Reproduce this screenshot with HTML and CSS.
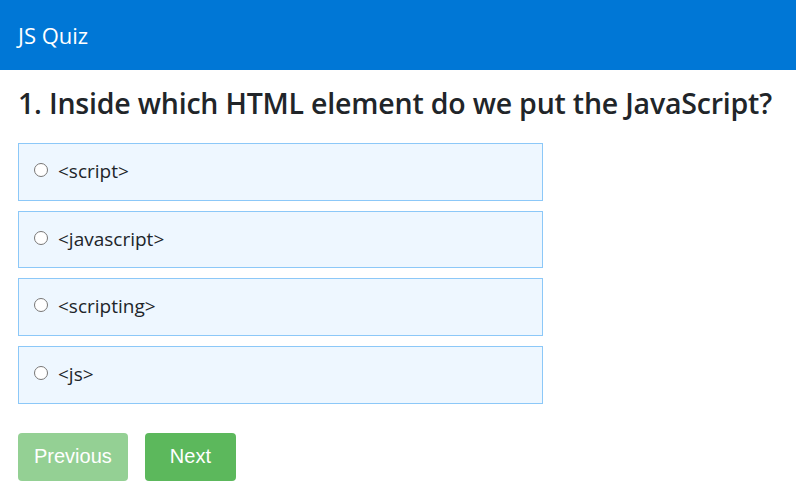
FILE: index.html
```html
<!DOCTYPE html>
<html>
<head>
<meta charset="utf-8">
<title>JS Quiz</title>
<link rel="stylesheet" href="styles.css">
</head>
<body>
<header class="topbar">JS Quiz</header>
<main class="quiz">
  <h1 class="question">1. Inside which HTML element do we put the JavaScript?</h1>
  <div class="options">
    <label class="option"><input type="radio" name="q1"><span>&lt;script&gt;</span></label>
    <label class="option"><input type="radio" name="q1"><span>&lt;javascript&gt;</span></label>
    <label class="option"><input type="radio" name="q1"><span>&lt;scripting&gt;</span></label>
    <label class="option"><input type="radio" name="q1"><span>&lt;js&gt;</span></label>
  </div>
  <div class="nav">
    <button class="btn btn-prev" disabled>Previous</button>
    <button class="btn btn-next">Next</button>
  </div>
</main>
</body>
</html>
```
FILE: styles.css
```css
body {
  margin: 0;
  font-family: "Open Sans", "Noto Sans", sans-serif;
  color: #212529;
  background: #fff;
}
.topbar {
  background: #0077d6;
  color: #fff;
  height: 70px;
  line-height: 70px;
  padding-left: 18px;
  font-size: 22px;
}
.quiz {
  padding: 0 18px;
}
.question {
  font-size: 28.5px;
  font-weight: 600;
  margin: 13px 0 20px;
  line-height: 40px;
  letter-spacing: -0.2px;
}
.options {
  display: flex;
  flex-direction: column;
  gap: 10px;
  width: 525px;
}
.option {
  display: flex;
  align-items: flex-start;
  box-sizing: border-box;
  height: 57.7px;
  padding: 14px 14px;
  background: #eef7ff;
  border: 1px solid #8cc8f8;
  font-size: 19px;
  font-family: "Open Sans", "Noto Sans", sans-serif;
  line-height: 26px;
}
.option input {
  margin: 5px 10px 0 1px;
  width: 14px;
  height: 14px;
}
.nav {
  display: flex;
  gap: 17px;
  margin-top: 29px;
}
.btn {
  font-family: "Liberation Sans", Arial, sans-serif;
  font-size: 20px;
  color: #fff;
  background: #5cb85c;
  border: none;
  border-radius: 4px;
  height: 48px;
}
.btn-prev {
  padding: 0 16px;
}
.btn-next {
  padding: 0 25px;
}
.btn:disabled {
  opacity: 0.65;
}
```
